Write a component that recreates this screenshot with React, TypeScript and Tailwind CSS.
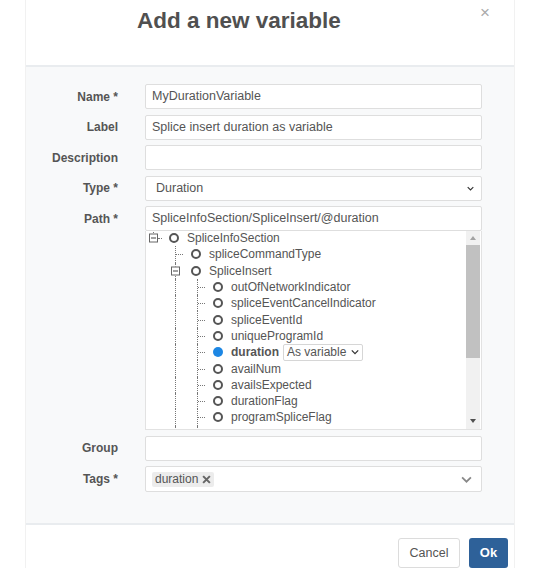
import { ReactNode } from "react";

type TreeRow = {
  label: string;
  level: number;
  kind: "root" | "branch" | "leaf";
  guides: boolean[];
  selected?: boolean;
};

const rows: TreeRow[] = [
  { label: "SpliceInfoSection", level: 0, kind: "root", guides: [] },
  { label: "spliceCommandType", level: 1, kind: "leaf", guides: [false] },
  { label: "SpliceInsert", level: 1, kind: "branch", guides: [false] },
  { label: "outOfNetworkIndicator", level: 2, kind: "leaf", guides: [false, true] },
  { label: "spliceEventCancelIndicator", level: 2, kind: "leaf", guides: [false, true] },
  { label: "spliceEventId", level: 2, kind: "leaf", guides: [false, true] },
  { label: "uniqueProgramId", level: 2, kind: "leaf", guides: [false, true] },
  { label: "duration", level: 2, kind: "leaf", guides: [false, true], selected: true },
  { label: "availNum", level: 2, kind: "leaf", guides: [false, true] },
  { label: "availsExpected", level: 2, kind: "leaf", guides: [false, true] },
  { label: "durationFlag", level: 2, kind: "leaf", guides: [false, true] },
  { label: "programSpliceFlag", level: 2, kind: "leaf", guides: [false, true] },
  { label: "spliceImmediateFlag", level: 2, kind: "leaf", guides: [false, true] },
];

const font = "font-['Liberation_Sans',Arial,sans-serif]";

const Chevron = ({ className }: { className: string }) => (
  <svg viewBox="0 0 10 6" className={className} fill="none">
    <path d="M1 1 L5 5 L9 1" stroke="currentColor" strokeWidth="1.6" />
  </svg>
);

const Expander = () => (
  <span className="absolute left-[3px] top-1/2 -translate-y-1/2 w-[9px] h-[9px] border border-[#666] bg-white flex items-center justify-center">
    <span className="block w-[5px] h-px bg-[#444]" />
  </span>
);

const TreeLine = ({ row }: { row: TreeRow }) => (
  <div className="flex items-center h-[16.3px] whitespace-nowrap">
    {row.guides.map((on, i) => (
      <div key={i} className="relative w-[22px] h-full shrink-0">
        {on && <span className="absolute left-[7px] top-0 bottom-0 border-l border-dotted border-[#777]" />}
      </div>
    ))}
    <div className="relative w-[22px] h-full shrink-0">
      {row.kind === "root" ? (
        <>
          <span className="absolute left-[7px] top-0 h-[3px] border-l border-dotted border-[#777]" />
          <Expander />
          <span className="absolute left-[12px] w-[4px] top-1/2 border-t border-dotted border-[#777]" />
        </>
      ) : (
        <>
          <span className="absolute left-[7px] top-0 bottom-0 border-l border-dotted border-[#777]" />
          {row.kind === "branch" ? (
            <Expander />
          ) : (
            <span className="absolute left-[8px] w-[7px] top-1/2 border-t border-dotted border-[#777]" />
          )}
        </>
      )}
    </div>
    {row.selected ? (
      <span className="ml-px w-[10px] h-[10px] rounded-full bg-[#1d87e4] shrink-0" />
    ) : (
      <span className="ml-px w-[10px] h-[10px] rounded-full border-2 border-[#555] shrink-0" />
    )}
    <span className={`ml-[8px] text-[12px] text-[#555] ${row.selected ? "font-bold" : ""}`}>{row.label}</span>
    {row.selected && (
      <span className="ml-[4px] h-[17px] px-[3px] border border-[#d6d6d6] rounded-[2px] bg-white flex items-center gap-[5px] text-[12px] text-[#555]">
        As variable
        <Chevron className="w-[8px] h-[6px] text-[#333]" />
      </span>
    )}
  </div>
);

const Field = ({ label, children, top }: { label: string; children: ReactNode; top?: boolean }) => (
  <div className={`flex ${top ? "items-start" : "items-center"}`}>
    <div className="w-[92px] h-[25px] flex items-center justify-end text-[12px] font-bold text-[#555]">{label}</div>
    <div className="ml-[27px] w-[337px]">{children}</div>
  </div>
);

const inputCls =
  "h-[25px] w-full bg-white border border-[#dedede] rounded-[2px] px-[6px] flex items-center text-[12.5px] text-[#555] whitespace-nowrap";

export default function App() {
  return (
    <div className={`w-[540px] h-[571px] overflow-hidden bg-white ${font}`}>
      <div className="ml-[25px] w-[490px] border-x border-[#f1f1f1]">
        <div className="h-[67px] flex items-start border-b-2 border-[#e9ecef]">
          <h1 className="pl-[111px] pt-[10px] text-[22.5px] leading-none font-bold text-[#505050]">Add a new variable</h1>
          <span className="ml-auto mr-[24px] mt-[4px] text-[17px] leading-none text-[#aaa]">×</span>
        </div>

        <div className="h-[458px] bg-[#f8f9fa] border-b-2 border-[#e9ecef] pt-[17px] flex flex-col gap-[5.5px]">
          <Field label="Name *">
            <div className={inputCls}>MyDurationVariable</div>
          </Field>
          <Field label="Label">
            <div className={inputCls}>Splice insert duration as variable</div>
          </Field>
          <Field label="Description">
            <div className={inputCls} />
          </Field>
          <Field label="Type *">
            <div className={`${inputCls} pl-[10px] justify-between`}>
              Duration
              <Chevron className="w-[7px] h-[5px] text-[#333] mr-[1px]" />
            </div>
          </Field>
          <Field label="Path *" top>
            <div className={`${inputCls} px-[4px]`}>SpliceInfoSection/SpliceInsert/@duration</div>
            <div className="h-[199px] bg-white border border-t-0 border-[#e2e2e2] flex overflow-hidden">
              <div className="flex-1 overflow-hidden -mt-[1px]">
                {rows.map((r) => (
                  <TreeLine key={r.label} row={r} />
                ))}
              </div>
              <div className="w-[14px] mr-px bg-[#f1f1f1] flex flex-col">
                <div className="h-[14px] flex items-center justify-center">
                  <span className="w-0 h-0 border-x-[3.5px] border-x-transparent border-b-[4px] border-b-[#a3a3a3]" />
                </div>
                <div className="h-[113px] bg-[#c1c1c1]" />
                <div className="flex-1" />
                <div className="h-[16px] flex items-center justify-center">
                  <span className="w-0 h-0 border-x-[3.5px] border-x-transparent border-t-[4px] border-t-[#505050]" />
                </div>
              </div>
            </div>
          </Field>
          <Field label="Group">
            <div className={inputCls} />
          </Field>
          <Field label="Tags *">
            <div className={`${inputCls} h-[26px] px-[3px] justify-between`}>
              <span className="h-[15px] px-[3px] rounded-[2px] bg-[#ececec] flex items-center gap-[4px] text-[12px] text-[#555]">
                duration
                <svg viewBox="0 0 8 8" className="w-[9px] h-[9px]">
                  <path d="M1 1 L7 7 M7 1 L1 7" stroke="#666" strokeWidth="1.8" />
                </svg>
              </span>
              <Chevron className="w-[11px] h-[7px] text-[#888] mr-[3px]" />
            </div>
          </Field>
        </div>

        <div className="flex justify-end gap-[9px] pt-[13px] pr-[6px]">
          <button className="h-[30px] w-[62px] bg-white border border-[#dcdcdc] rounded-[3px] text-[12.5px] text-[#555]">
            Cancel
          </button>
          <button className="h-[30px] w-[39px] bg-[#2e6199] rounded-[3px] text-[13px] font-semibold text-white">Ok</button>
        </div>
      </div>
    </div>
  );
}
